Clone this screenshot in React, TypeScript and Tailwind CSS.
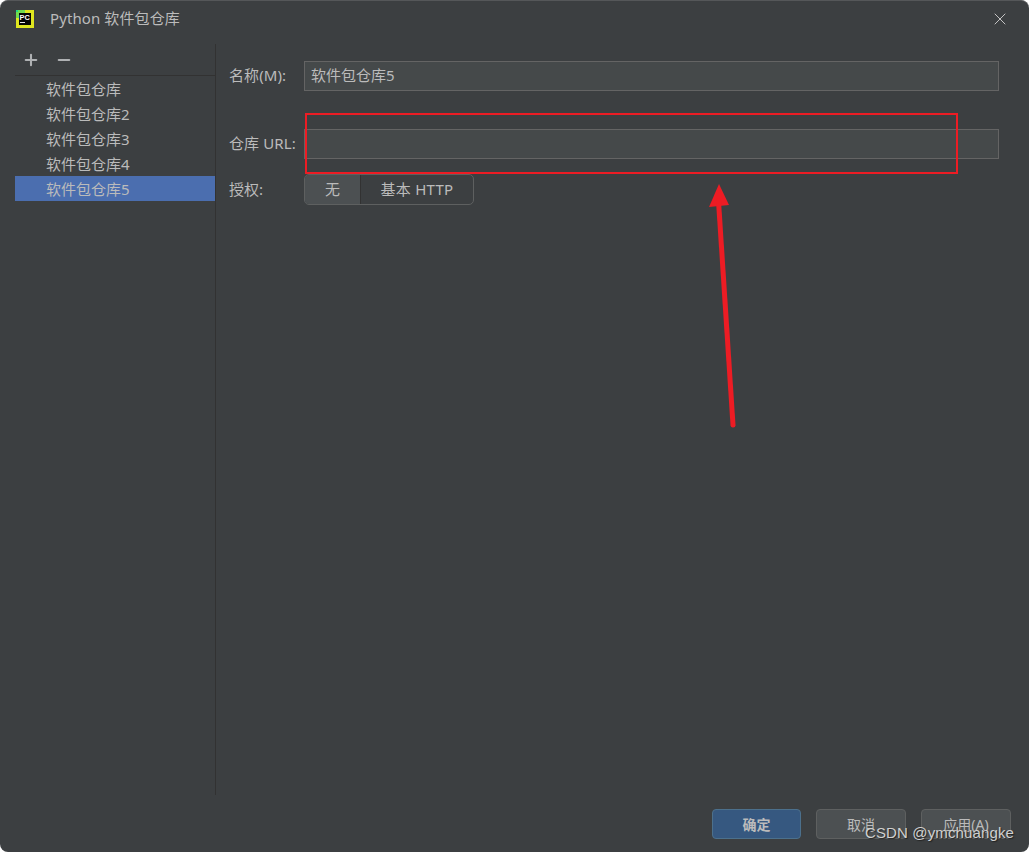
import { Minus, Plus, X } from 'lucide-react';

const repos = ['软件包仓库', '软件包仓库2', '软件包仓库3', '软件包仓库4', '软件包仓库5'];
const font = "font-['Noto_Sans','Noto_Sans_CJK_SC',sans-serif]";

function PyCharmLogo() {
  return (
    <svg width="18" height="18" viewBox="0 0 18 18" className="shrink-0">
      <rect width="18" height="18" fill="#dfe61f" />
      <rect width="9" height="3" fill="#6fdc4e" />
      <rect width="3" height="8" fill="#6fdc4e" />
      <rect width="2" height="2" fill="#21d789" />
      <rect x="3" y="3" width="12" height="12" fill="#050505" />
      <rect x="4" y="12" width="5" height="1" fill="#e8e8e8" />
      <text x="3.6" y="9.8" fontSize="7.4" fontWeight="700" fill="#ffffff" fontFamily="Liberation Sans">PC</text>
    </svg>
  );
}

function Field({ label, value, className }: { label: string; value?: string; className: string }) {
  return (
    <div className={`flex items-center ${className}`}>
      <span className="w-[75px] shrink-0 text-[15px] leading-[20px] tracking-[0.1px] -translate-y-[1px]">{label}</span>
      <div className="flex h-[30px] flex-1 items-center border border-[#646464] bg-[#45494a] px-[6px] text-[15px] leading-[20px]">
        <span className="-translate-y-[1px]">{value}</span>
      </div>
    </div>
  );
}

function FooterButton({ label, primary }: { label: string; primary?: boolean }) {
  return (
    <button
      className={`flex h-[30px] items-center justify-center rounded-[4px] border text-[14px] ${
        primary
          ? 'w-[89px] border-[#4c708c] bg-[#365880] font-bold text-[#bbbbbb]'
          : 'w-[90px] border-[#5e6060] bg-[#4c5052] text-[#bbbbbb]'
      }`}
    >
      {label}
    </button>
  );
}

export default function App() {
  return (
    <div className={`relative flex h-[852px] w-[1029px] flex-col overflow-hidden rounded-[8px] border-t border-[#555759] bg-[#3c3f41] text-[#bbbbbb] ${font}`}>
      <header className="flex h-[36px] shrink-0 items-center pl-[16px] pr-[19px]">
        <PyCharmLogo />
        <span className="ml-[16px] -translate-y-[1px] text-[15px] tracking-[0.1px]">Python 软件包仓库</span>
        <X size={20} strokeWidth={1.2} className="ml-auto text-[#c4c4c4]" />
      </header>

      <div className="flex h-[758px] shrink-0 pt-[7px]">
        <aside className="w-[216px] shrink-0 border-r border-[#323232] pl-[15px]">
          <div className="flex h-[32px] items-center gap-[15px] border-b border-[#323232] pl-[7px]">
            <Plus size={18} strokeWidth={2.8} className="text-[#afb1b3]" />
            <Minus size={18} strokeWidth={2.8} className="text-[#afb1b3]" />
          </div>
          <ul>
            {repos.map((repo, i) => (
              <li
                key={repo}
                className={`flex h-[25px] items-center pl-[31px] pt-[2px] text-[15px] ${
                  i === repos.length - 1 ? 'bg-[#4b6eaf]' : ''
                }`}
              >
                {repo}
              </li>
            ))}
          </ul>
        </aside>

        <main className="flex-1 pl-[13px] pr-[30px] pt-[17px]">
          <Field label="名称(M):" value="软件包仓库5" className="" />
          <Field label="仓库 URL:" className="mt-[38px]" />
          <div className="mt-[15px] flex items-center">
            <span className="w-[75px] shrink-0 text-[15px]">授权:</span>
            <div className="flex h-[31px] w-[170px] overflow-hidden rounded-[5px] border border-[#5e6060] text-[15px]">
              <div className="flex w-[56px] items-center justify-center border-r border-[#323232] bg-[#4c5052]">无</div>
              <div className="flex flex-1 items-center justify-center tracking-[0.25px]">基本 HTTP</div>
            </div>
          </div>
        </main>
      </div>

      <footer className="flex flex-1 justify-end gap-[15px] pr-[18px] pt-[14px]">
        <FooterButton label="确定" primary />
        <FooterButton label="取消" />
        <FooterButton label="应用(A)" />
      </footer>

      {/* annotations pasted over the screenshot */}
      <div className="absolute left-[305px] top-[112px] h-[61px] w-[653px] border-2 border-[#ed1c24]" />
      <svg className="absolute left-[700px] top-[170px]" width="50" height="265" viewBox="0 0 50 265">
        <path d="M19 13 L9 36 L29 34 Z" fill="#ed1c24" />
        <path d="M18.5 30 L33 254" stroke="#ed1c24" strokeWidth="5" strokeLinecap="round" fill="none" />
      </svg>
      <span className="absolute left-[865px] top-[822px] font-['Liberation_Sans',sans-serif] text-[15px] leading-[20px] tracking-[0.13px] text-[#d0d0d0] [text-shadow:1px_1px_1px_#222]">
        CSDN @ymchuangke
      </span>
    </div>
  );
}
